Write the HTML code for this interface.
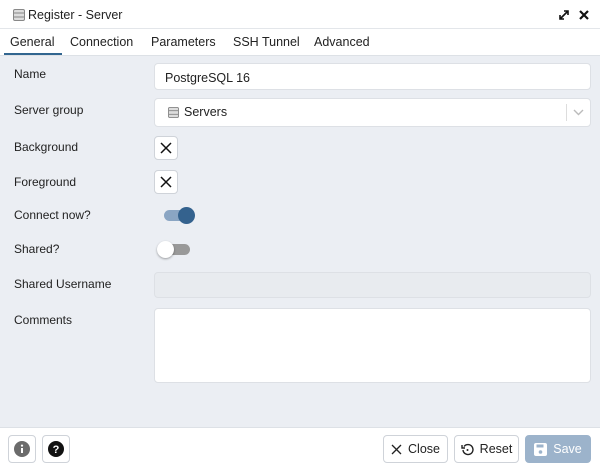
<!DOCTYPE html>
<html><head><style>
*{box-sizing:border-box;margin:0;padding:0}
body{width:600px;height:464px;overflow:hidden;background:#ebeef3;font-family:"Liberation Sans",sans-serif;font-size:12.5px;color:#222;position:relative}
.abs{position:absolute}
.title{left:0;top:0;width:600px;height:29px;background:#fff;border-bottom:1px solid #e3e6ea}
.tabs{left:0;top:29px;width:600px;height:27px;background:#fff;border-bottom:1px solid #dde1e6}
.tab{position:absolute;top:6px;font-size:12.5px;color:#222}
.lbl{left:14px;font-size:12px;color:#222}
.inp{background:#fff;border:1px solid #dde0e5;border-radius:4px}
.chk{width:24px;height:24px;background:#fff;border:1px solid #cfd3d9;border-radius:4px;left:154px}
.foot{left:0;top:427px;width:600px;height:37px;background:#fff;border-top:1px solid #dde1e6}
.btn{position:absolute;top:435px;height:28px;background:#fff;border:1px solid #cfd3d9;border-radius:4px;font-size:12.5px;display:flex;align-items:center;justify-content:center;gap:6px;color:#222}
</style></head><body>
<div class="abs title"></div>
<svg class="abs" style="left:13px;top:9px" width="12" height="12" viewBox="0 0 12 12"><rect x="0.5" y="0.5" width="11" height="11" rx="1.5" fill="#ddd" stroke="#888"/><line x1="1" y1="4" x2="11" y2="4" stroke="#888"/><line x1="1" y1="8" x2="11" y2="8" stroke="#888"/></svg>
<div class="abs" style="left:28px;top:8px;font-size:12.5px">Register - Server</div>
<svg class="abs" style="left:558px;top:9px" width="12" height="12" viewBox="0 0 12 12"><path d="M2 10L10 2M6 2h4v4M2 6v4h4" stroke="#111" stroke-width="1.6" fill="none"/></svg>
<svg class="abs" style="left:579px;top:10px" width="10" height="10" viewBox="0 0 10 10"><path d="M1 1L9 9M9 1L1 9" stroke="#111" stroke-width="2.2"/></svg>
<div class="abs tabs">
<span class="tab" style="left:10px">General</span>
<div class="abs" style="left:4px;top:24px;width:58px;height:2px;background:#326690"></div>
<span class="tab" style="left:70px">Connection</span>
<span class="tab" style="left:151px">Parameters</span>
<span class="tab" style="left:233px">SSH Tunnel</span>
<span class="tab" style="left:314px">Advanced</span>
</div>
<div class="abs lbl" style="top:67px">Name</div>
<div class="abs inp" style="left:154px;top:63px;width:437px;height:27px;padding:7px 10px">PostgreSQL 16</div>
<div class="abs lbl" style="top:103px">Server group</div>
<div class="abs inp" style="left:154px;top:98px;width:437px;height:29px"></div>
<svg class="abs" style="left:168px;top:107px" width="11" height="11" viewBox="0 0 12 12"><rect x="0.5" y="0.5" width="11" height="11" rx="1.5" fill="#ddd" stroke="#888"/><line x1="1" y1="4" x2="11" y2="4" stroke="#888"/><line x1="1" y1="8" x2="11" y2="8" stroke="#888"/></svg>
<div class="abs" style="left:184px;top:105px">Servers</div>
<div class="abs" style="left:566px;top:104px;width:1px;height:17px;background:#ddd"></div>
<svg class="abs" style="left:573px;top:109px" width="11" height="7" viewBox="0 0 11 7"><path d="M1 1l4.5 4.5L10 1" stroke="#bbb" stroke-width="1.4" fill="none"/></svg>
<div class="abs lbl" style="top:140px">Background</div>
<div class="abs chk" style="top:136px"></div>
<svg class="abs" style="left:160px;top:142px" width="12" height="12"><path d="M1 1L11 11M11 1L1 11" stroke="#111" stroke-width="1.5"/></svg>
<div class="abs lbl" style="top:175px">Foreground</div>
<div class="abs chk" style="top:170px"></div>
<svg class="abs" style="left:160px;top:176px" width="12" height="12"><path d="M1 1L11 11M11 1L1 11" stroke="#111" stroke-width="1.5"/></svg>
<div class="abs lbl" style="top:208px">Connect now?</div>
<div class="abs" style="left:164px;top:210px;width:26px;height:11px;border-radius:6px;background:#8aa5c3"></div>
<div class="abs" style="left:178px;top:207px;width:17px;height:17px;border-radius:50%;background:#34628e"></div>
<div class="abs lbl" style="top:242px">Shared?</div>
<div class="abs" style="left:164px;top:244px;width:26px;height:11px;border-radius:6px;background:#999"></div>
<div class="abs" style="left:157px;top:241px;width:17px;height:17px;border-radius:50%;background:#fff;box-shadow:0 1px 2px rgba(0,0,0,.35)"></div>
<div class="abs lbl" style="top:277px">Shared Username</div>
<div class="abs" style="left:154px;top:272px;width:437px;height:26px;background:#e8ebef;border:1px solid #dde0e5;border-radius:4px"></div>
<div class="abs lbl" style="top:313px">Comments</div>
<div class="abs inp" style="left:154px;top:308px;width:437px;height:75px"></div>
<div class="abs foot"></div>
<div class="btn" style="left:8px;width:28px"><svg width="16" height="16"><circle cx="8" cy="8" r="8" fill="#6b6b6b"/><rect x="7" y="7" width="2" height="5" fill="#fff"/><circle cx="8" cy="4.6" r="1.1" fill="#fff"/></svg></div>
<div class="btn" style="left:42px;width:28px"><svg width="16" height="16"><circle cx="8" cy="8" r="8" fill="#111"/><text x="8" y="12" font-size="11" font-weight="bold" fill="#fff" text-anchor="middle" font-family="Liberation Sans">?</text></svg></div>
<div class="btn" style="left:383px;width:65px"><svg width="11" height="11"><path d="M1 1L10 10M10 1L1 10" stroke="#222" stroke-width="1.3"/></svg>Close</div>
<div class="btn" style="left:454px;width:65px"><svg width="13" height="13" viewBox="0 0 13 13"><path d="M3 3.5A5 5 0 1 1 2 7" stroke="#222" stroke-width="1.4" fill="none"/><path d="M1 2v3h3" stroke="#222" stroke-width="1.4" fill="none"/><circle cx="6.5" cy="7" r="1" fill="#222"/></svg>Reset</div>
<div class="btn" style="left:525px;width:66px;background:#9cb3cb;border-color:#9cb3cb;color:#fff"><svg width="13" height="13" viewBox="0 0 13 13"><rect x="0" y="0" width="13" height="13" rx="2" fill="#fff"/><rect x="2.5" y="1.5" width="7" height="3" fill="#9cb3cb"/><circle cx="6.5" cy="9" r="1.8" fill="#9cb3cb"/></svg>Save</div>
</body></html>
